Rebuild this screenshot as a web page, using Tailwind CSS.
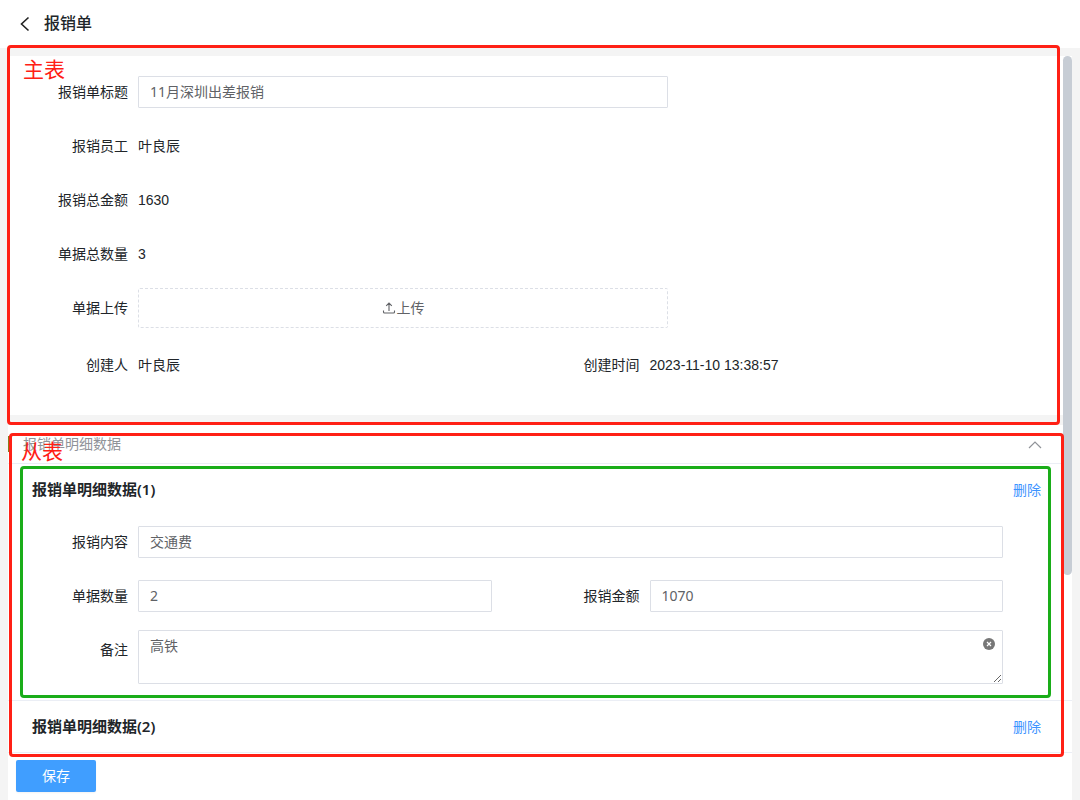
<!DOCTYPE html>
<html lang="zh-CN">
<head>
  <meta charset="UTF-8">
  <meta name="viewport" content="width=device-width, initial-scale=1.0">
  <title>报销单</title>
  <script src="https://cdn.jsdelivr.net/npm/@tailwindcss/browser@4"></script>
</head>
<body class="relative flex h-screen flex-col overflow-hidden bg-[#f4f4f4] font-['Liberation_Sans','Noto_Sans_CJK_SC',sans-serif] text-sm text-[#212529]">
  <header class="flex h-12 shrink-0 items-center gap-3 bg-white px-[18px]">
    <button type="button" aria-label="返回">
      <svg class="h-4 w-3.5" viewBox="0 0 14 16" fill="none" stroke="#222" stroke-width="1.6"><path d="M10.5 1.500 3.500 8l7 6.500"/></svg>
    </button>
    <h1 class="text-base font-medium">报销单</h1>
  </header>

  <main class="relative mx-2 mt-2 min-h-0 flex-1 overflow-hidden">
    <!-- 主表 -->
    <section class="bg-white pt-5 pr-[29px] pb-[34px] pl-3">
      <div class="flex h-8 items-center">
        <label for="title" class="w-[118px] shrink-0 pr-2.5 text-right">报销单标题</label>
        <input id="title" value="11月深圳出差报销" class="h-8 w-full max-w-[530px] rounded-[1px] border border-[#dcdfe6] px-[11px] pb-0.5 font-['Noto_Sans','Noto_Sans_CJK_SC',sans-serif] text-[#606266]">
      </div>
      <div class="mt-[22px] flex h-8 items-center">
        <span class="w-[118px] shrink-0 pr-2.5 text-right">报销员工</span>
        <span>叶良辰</span>
      </div>
      <div class="mt-[22px] flex h-8 items-center">
        <span class="w-[118px] shrink-0 pr-2.5 text-right">报销总金额</span>
        <span>1630</span>
      </div>
      <div class="mt-[22px] flex h-8 items-center">
        <span class="w-[118px] shrink-0 pr-2.5 text-right">单据总数量</span>
        <span>3</span>
      </div>
      <div class="mt-[18px] flex h-10 items-center">
        <span class="w-[118px] shrink-0 pr-2.5 text-right">单据上传</span>
        <button type="button" class="flex h-10 w-full max-w-[530px] items-center justify-center gap-px rounded-xs border border-dashed border-[#dcdfe6] text-[#606266]">
          <svg class="h-3.5 w-3.5" viewBox="0 0 14 14" fill="none" stroke="#606266" stroke-width="1.1"><path d="M7 10V2M4.200 4.800 7 2l2.800 2.800M1.500 9.500v1.500q0 1 1 1h9q1 0 1-1V9.500"/></svg>
          上传
        </button>
      </div>
      <div class="mt-[21px] grid h-8 grid-cols-2 items-center">
        <div class="flex items-center">
          <span class="w-[118px] shrink-0 pr-2.5 text-right">创建人</span>
          <span>叶良辰</span>
        </div>
        <div class="flex items-center">
          <span class="w-[118px] shrink-0 pr-2.5 text-right">创建时间</span>
          <span>2023-11-10 13:38:57</span>
        </div>
      </div>
    </section>

    <!-- 从表 -->
    <section class="mt-2.5 bg-white">
      <div class="flex h-[39px] items-center justify-between border-b border-[#ebeef5] pr-[30px]">
        <h2 class="flex items-center gap-3 text-[#909399]"><span class="h-4 w-[3px] bg-[#8a7a1e]"></span>报销单明细数据</h2>
        <button type="button" aria-label="收起">
          <svg class="h-3.5 w-3.5" viewBox="0 0 14 14" fill="none" stroke="#909399" stroke-width="1.2"><path d="M1 11l6-6 6 6"/></svg>
        </button>
      </div>

      <div class="border-b border-[#ebeef5] pb-4">
        <div class="flex h-[52px] items-center justify-between pr-[31px] pl-6">
          <h3 class="font-['Noto_Sans','Noto_Sans_CJK_SC',sans-serif] text-[15px] font-semibold">报销单明细数据(1)</h3>
          <button type="button" class="text-[#3d94ff]">删除</button>
        </div>
        <div class="pt-2.5 pr-[29px] pl-3">
          <div class="flex h-8 items-center pr-10">
            <label for="content" class="w-[118px] shrink-0 pr-2.5 text-right">报销内容</label>
            <input id="content" value="交通费" class="h-8 w-full rounded-[1px] border border-[#dcdfe6] px-[11px] pb-0.5 text-[#606266]">
          </div>
          <div class="mt-[22px] grid grid-cols-2">
            <div class="flex h-8 items-center pr-10">
              <label for="count" class="w-[118px] shrink-0 pr-2.5 text-right">单据数量</label>
              <input id="count" value="2" class="h-8 w-full min-w-0 rounded-[1px] border border-[#dcdfe6] px-[11px] pb-0.5 font-['Noto_Sans','Noto_Sans_CJK_SC',sans-serif] text-[#606266]">
            </div>
            <div class="flex h-8 items-center pr-10">
              <label for="amount" class="w-[118px] shrink-0 pr-2.5 text-right">报销金额</label>
              <input id="amount" value="1070" class="h-8 w-full min-w-0 rounded-[1px] border border-[#dcdfe6] px-[11px] pb-0.5 font-['Noto_Sans','Noto_Sans_CJK_SC',sans-serif] text-[#606266]">
            </div>
          </div>
          <div class="mt-[18px] flex items-start pr-10">
            <label for="remark" class="w-[118px] shrink-0 pt-1 pr-2.5 text-right leading-8">备注</label>
            <div class="relative flex w-full">
              <textarea id="remark" class="h-[54px] w-full resize rounded-[1px] border border-[#dcdfe6] px-[11px] py-[5px] leading-[21px] text-[#606266]">高铁</textarea>
              <button type="button" aria-label="清空" class="absolute top-2 right-2">
                <svg class="h-3 w-3" viewBox="0 0 12 12"><circle cx="6" cy="6" r="6" fill="#777"/><path d="M4 4l4 4M8 4l-4 4" stroke="#fff" stroke-width="1.2"/></svg>
              </button>
            </div>
          </div>
        </div>
      </div>

      <div class="flex h-[52px] items-center justify-between pr-[31px] pl-6">
        <h3 class="font-['Noto_Sans','Noto_Sans_CJK_SC',sans-serif] text-[15px] font-semibold">报销单明细数据(2)</h3>
        <button type="button" class="text-[#3d94ff]">删除</button>
      </div>
    </section>

    <div class="absolute top-0 right-0 h-[519px] w-[9px] rounded-full bg-[#c7cdd5]"></div>
  </main>

  <footer class="mx-2 flex h-12 shrink-0 border-t border-[#ebeef5] bg-white px-2 pt-[7px]">
    <button type="button" class="h-8 w-20 rounded-xs bg-[#409eff] text-white shadow-xs">保存</button>
  </footer>

  <!-- 标注框 -->
  <div class="pointer-events-none absolute top-[45px] right-5 left-[7px] h-[380px] rounded-sm border-3 border-[#ff2015]">
    <span class="absolute top-1.5 left-[13px] text-[21px] leading-8 text-[#ff2015]">主表</span>
  </div>
  <div class="pointer-events-none absolute top-[433px] right-4 left-[9px] h-[324px] rounded-sm border-3 border-[#ff2015]">
    <span class="absolute top-0 left-[9px] text-[21px] leading-8 text-[#ff2015]">从表</span>
  </div>
  <div class="pointer-events-none absolute top-[466px] right-[29px] left-5 h-[232px] rounded-sm border-3 border-[#1aad19]"></div>
</body>
</html>
